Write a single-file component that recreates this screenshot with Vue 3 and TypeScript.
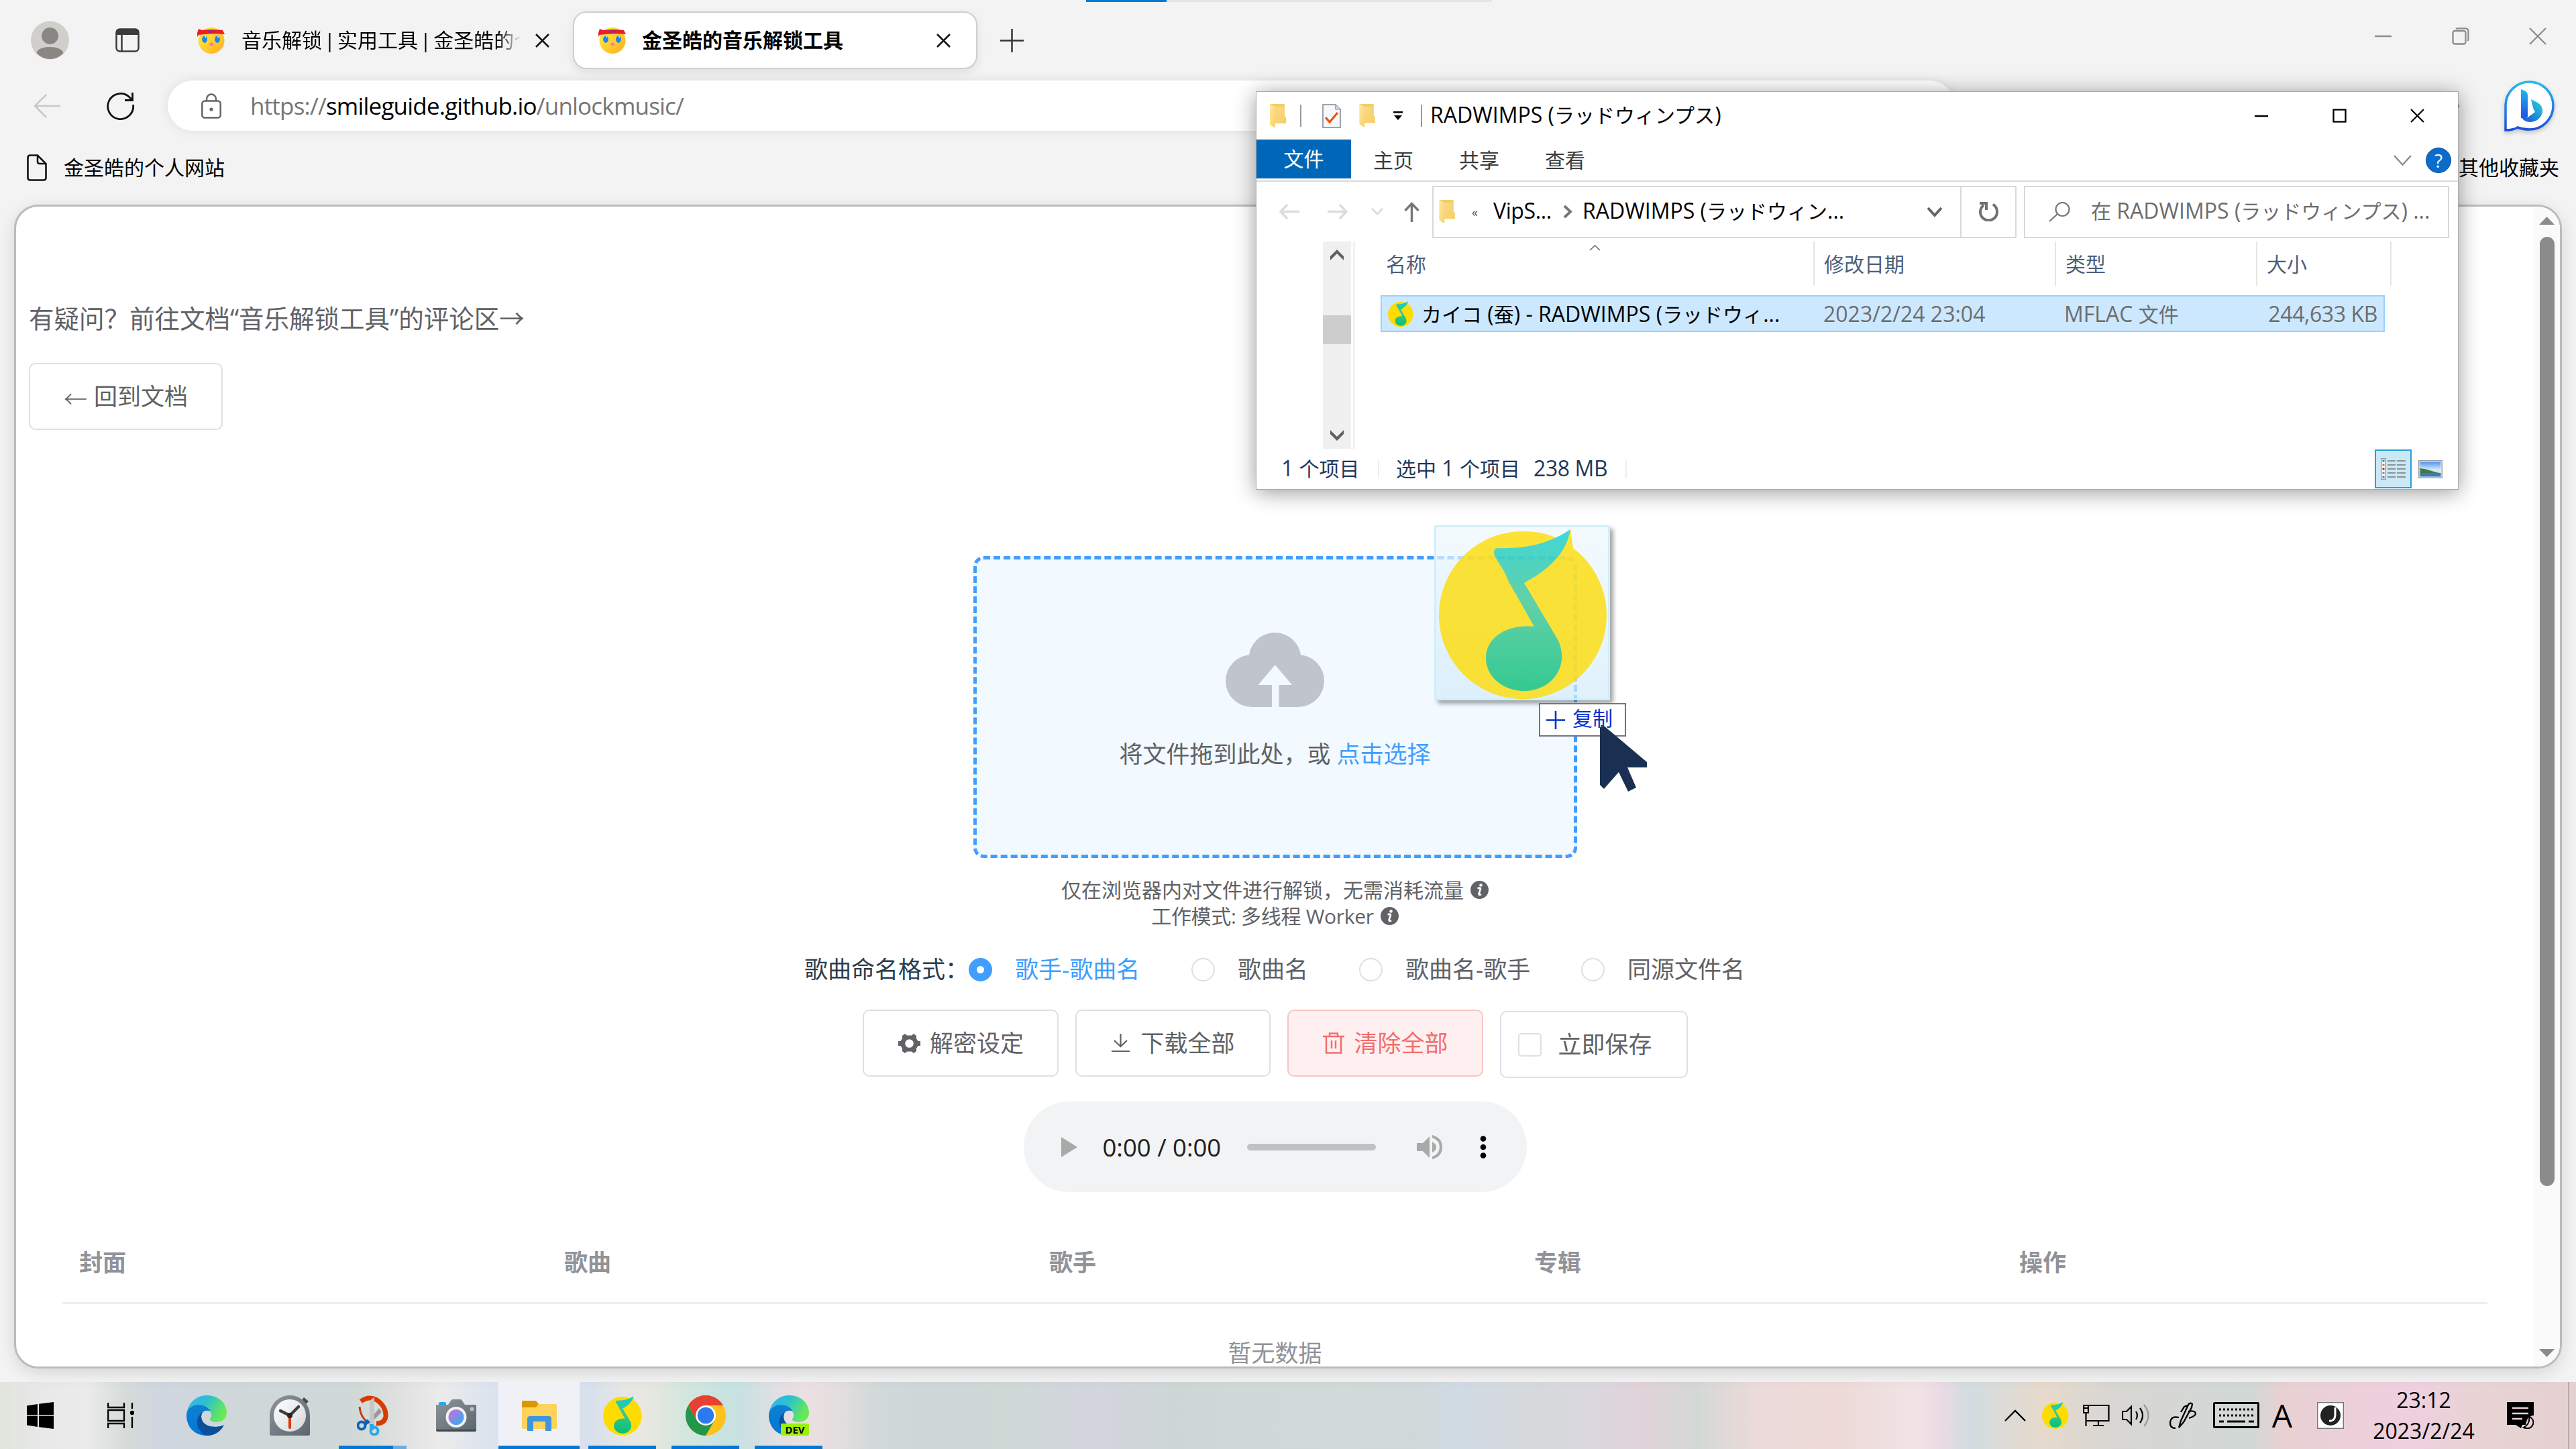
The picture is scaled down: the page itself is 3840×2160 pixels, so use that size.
<script setup lang="ts">
interface Radio { label: string; checked: boolean }

const radios: Radio[] = [
  { label: '歌手-歌曲名', checked: true },
  { label: '歌曲名', checked: false },
  { label: '歌曲名-歌手', checked: false },
  { label: '同源文件名', checked: false },
]
const columns: string[] = ['封面', '歌曲', '歌手', '专辑', '操作']
const ribbon: string[] = ['主页', '共享', '查看']
</script>

<template>
  <div class="screen">
    <svg class="defs" width="0" height="0" aria-hidden="true">
      <defs>
        <linearGradient id="note" x1="0" y1="0" x2="0" y2="1"><stop offset="0" stop-color="#10cdcb" /><stop offset=".45" stop-color="#3cc790" /><stop offset="1" stop-color="#06bf74" /></linearGradient>
        <linearGradient id="fold" x1="0" y1="0" x2="1" y2="1"><stop offset="0" stop-color="#ffe8a6" /><stop offset="1" stop-color="#f8d064" /></linearGradient>
        <linearGradient id="face" x1="0" y1="0" x2="1" y2="1"><stop offset="0" stop-color="#fff23c" /><stop offset="1" stop-color="#ffab20" /></linearGradient>
        <linearGradient id="edgeTop" x1="0" y1="0" x2="1" y2=".4"><stop offset="0" stop-color="#36b4f5" /><stop offset=".5" stop-color="#2cc0d0" /><stop offset="1" stop-color="#66ea56" /></linearGradient>
        <linearGradient id="edgeBlue" x1="0" y1="0" x2="0" y2="1"><stop offset="0" stop-color="#0f7fd0" /><stop offset="1" stop-color="#0078d7" /></linearGradient>
        <linearGradient id="grey" x1="0" y1="0" x2="1" y2="1"><stop offset="0" stop-color="#8c959b" /><stop offset="1" stop-color="#5c666d" /></linearGradient>
        <linearGradient id="dial" x1="0" y1="0" x2="1" y2="1"><stop offset="0" stop-color="#ffffff" /><stop offset="1" stop-color="#d3d6d8" /></linearGradient>
        <linearGradient id="lens" x1="0" y1="0" x2="1" y2="1"><stop offset=".2" stop-color="#b17ae0" /><stop offset="1" stop-color="#22b4f0" /></linearGradient>
        <linearGradient id="bingA" x1="0" y1="0" x2="0" y2="1"><stop offset="0" stop-color="#25b7f0" /><stop offset="1" stop-color="#1b4fe0" /></linearGradient>
        <linearGradient id="bingB" x1="0" y1="1" x2="1" y2="0"><stop offset="0" stop-color="#1b48dc" /><stop offset="1" stop-color="#28dcd8" /></linearGradient>
        <linearGradient id="sky" x1="0" y1="0" x2="0" y2="1"><stop offset="0" stop-color="#4f95f0" /><stop offset=".5" stop-color="#cfe6fb" /><stop offset="1" stop-color="#cfe6fb" /></linearGradient>
      </defs>
      <symbol id="qq" viewBox="0 0 252 254">
        <path fill="#ffdc00" d="M126 3A125 125 0 1 0 200 28L196 0Q186 8 176 13A125 125 0 0 0 126 3Z" />
        <path fill="url(#note)" d="M88 28C135 30 170 18 196 0C190 36 164 60 127 80L178 166C196 207 165 241 127 241C95 241 70 219 70 192C70 162 100 141 142 145L104 78C98 60 84 45 82 36Q82 28 88 28Z" />
      </symbol>
      <symbol id="folder" viewBox="0 0 24 36">
        <path fill="#f3cd69" d="M0 0H22V18L24 20V29H6Z" />
        <path fill="url(#fold)" d="M0 0L8 4V36L0 31Z" />
        <path fill="url(#fold)" d="M8 4H22V18L24 20V29H8Z" opacity=".45" />
      </symbol>
      <symbol id="smile" viewBox="0 0 42 40">
        <path fill="#ffe838" d="M15 5Q21-4 27 5Z" />
        <circle cx="21" cy="20.500" r="19.500" fill="url(#face)" />
        <path fill="#ee1c25" d="M2 3L7 5Q21 3 38 5L41 11Q21 9 2 12L0 15V9Z" />
        <path d="M17 5L20 9M22 5L25 8" stroke="#6a35b8" stroke-width="2.500" />
        <ellipse cx="11" cy="18.500" rx="3.800" ry="5.200" fill="#1985f4" /><ellipse cx="30" cy="18.500" rx="3.800" ry="5.200" fill="#1985f4" />
        <circle cx="12" cy="15" r="1" fill="#fff" /><circle cx="31" cy="15" r="1" fill="#fff" />
        <path fill="#ff6fa8" d="M21 23L24 26L21 29L18 26Z" />
      </symbol>
      <symbol id="edge" viewBox="0 0 60 60">
        <path fill="url(#edgeTop)" d="M0 28C3 8 18 0 30 0C48 0 60 12 60 26C60 35 52 40 45 40C39 40 35 38 35 36C35 34 38 33 37 28C35 20 28 14 18 14C9 14 2 20 0 28Z" />
        <path fill="url(#edgeBlue)" d="M0 30C0 20 9 14 18 14C26 14 33 18 36 24C29 21 22 24 22 32C22 44 36 50 55 45C49 56 39 60 30 60C12 60 0 47 0 30Z" />
        <path fill="#0d4f9c" d="M24 25C13 32 12 50 28 60C40 61 50 55 55 46C56 44 55 44 54 45C40 50 23 46 22 32Q22 28 24 25Z" />
      </symbol>
      <symbol id="info" viewBox="0 0 27 27">
        <circle cx="13.500" cy="13.500" r="13.500" fill="#606266" />
        <circle cx="15.500" cy="6.500" r="2.300" fill="#fff" />
        <path d="M10.500 11.500Q15 9.500 15 12L12.500 19.500Q12.500 22 16 20" fill="none" stroke="#fff" stroke-width="2.600" />
      </symbol>
    </svg>

    <!-- browser -->
    <div class="browser">
      <div class="loadbar"><i></i></div>
      <header class="tabstrip">
        <svg class="avatar" width="57" height="58" viewBox="0 0 57 58"><circle cx="28.500" cy="29" r="28.500" fill="#d0cfcb" /><ellipse cx="28.500" cy="22.500" rx="12.500" ry="12.500" fill="#8a8683" /><path fill="#8a8683" d="M8.500 48C10 36 46 36 48.500 48Q40 57 28.500 57T8.500 48Z" /></svg>
        <svg class="tabicon" width="36" height="36" viewBox="0 0 36 36"><rect x="1.500" y="1.500" width="33" height="33" rx="5" fill="none" stroke="#3b3b3b" stroke-width="2.500" /><path fill="#3b3b3b" d="M1 10V6Q1 1 6 1H30Q35 1 35 6V10Z" /><path d="M9.500 10V35" stroke="#3b3b3b" stroke-width="2.500" /></svg>
        <div class="tab">
          <svg width="42" height="40"><use href="#smile" /></svg>
          <span class="tabtext fade">音乐解锁 | 实用工具 | 金圣皓的个</span>
          <svg class="x" width="21" height="21" viewBox="0 0 21 21"><path d="M1 1L20 20M20 1L1 20" stroke="#111" stroke-width="2.500" /></svg>
        </div>
        <div class="tab active">
          <svg width="42" height="40"><use href="#smile" /></svg>
          <span class="tabtext bold">金圣皓的音乐解锁工具</span>
          <svg class="x" width="21" height="21" viewBox="0 0 21 21"><path d="M1 1L20 20M20 1L1 20" stroke="#111" stroke-width="2.500" /></svg>
        </div>
        <svg class="plus" width="35" height="35" viewBox="0 0 35 35"><path d="M17.500 0V35M0 17.500H35" stroke="#333" stroke-width="2.500" /></svg>
        <div class="winctl">
          <svg width="26" height="26" viewBox="0 0 26 26"><path d="M0 13H25" stroke="#8c8c8c" stroke-width="2.500" /></svg>
          <svg width="26" height="26" viewBox="0 0 26 26"><rect x="1.500" y="5" width="19" height="19.500" rx="3" fill="none" stroke="#8c8c8c" stroke-width="2.300" /><path d="M6 2Q7 1.300 9 1.300H20Q24.500 1.300 24.500 6V17Q24.500 19 23.500 20" fill="none" stroke="#8c8c8c" stroke-width="2.300" /></svg>
          <svg width="26" height="26" viewBox="0 0 26 26"><path d="M1 1L25 25M25 1L1 25" stroke="#8c8c8c" stroke-width="2.300" /></svg>
        </div>
      </header>

      <div class="toolbar">
        <svg class="back" width="40" height="36" viewBox="0 0 40 36"><path d="M40 18H2M19 1L2 18L19 35" fill="none" stroke="#c8c8c8" stroke-width="2.600" /></svg>
        <svg class="reload" width="42" height="42" viewBox="0 0 42 42"><path d="M39.500 19A19 19 0 1 1 33.500 7.500L38 12" fill="none" stroke="#111" stroke-width="2.800" /><path d="M38.500 1V12.500H27" fill="none" stroke="#111" stroke-width="2.800" /></svg>
        <div class="omnibox">
          <svg width="30" height="38" viewBox="0 0 30 38"><rect x="1.300" y="11.500" width="27.400" height="25" rx="4" fill="none" stroke="#666" stroke-width="2.500" /><path d="M8 11V8.500A7 7 0 0 1 22 8.500V11" fill="none" stroke="#666" stroke-width="2.500" /><circle cx="15" cy="24" r="2.600" fill="#666" /></svg>
          <span class="url">https://<b>smileguide.github.io</b>/unlockmusic/</span>
        </div>
        <i class="dot"></i>
        <svg class="bing" width="76" height="76" viewBox="0 0 76 76"><path d="M2 74V37A35.500 35.500 0 1 1 37.500 73Q28 73 20 70Q13 74 2 74Z" fill="#fff" stroke="url(#bingA)" stroke-width="3.500" /><path fill="url(#bingA)" d="M25 13L32 16Q35 18 35 21V54L25 56Z" /><path fill="url(#bingB)" d="M40 28L50 33Q58 38 57 47Q54 60 40 62Q26 62 25 50L35 55L46 47L43 41Z" /></svg>
      </div>

      <div class="bookmarks">
        <svg width="30" height="40" viewBox="0 0 30 40"><path d="M1.500 5Q1.500 1.500 5 1.500H16L28.500 14V35Q28.500 38.500 25 38.500H5Q1.500 38.500 1.500 35ZM16 1.500V11Q16 14 19 14H28.500" fill="none" stroke="#111" stroke-width="2.600" /></svg>
        <span>金圣皓的个人网站</span>
        <span class="others">其他收藏夹</span>
      </div>

      <div class="page">
        <main class="doc">
          <p class="question">有疑问？前往文档“音乐解锁工具”的评论区→</p>
          <button class="btn backdoc"><span class="arr">←</span>回到文档</button>

          <div class="drop">
            <svg width="147" height="111" viewBox="0 0 147 111"><g fill="#c0c4cc"><circle cx="39" cy="72" r="39" /><circle cx="108" cy="72" r="39" /><circle cx="73.500" cy="39" r="39" /><rect x="39" y="50" width="69" height="61" /></g><path fill="#f2f9ff" d="M73.700 48L99 78H79.500V111H69V78H48.500Z" /></svg>
            <p>将文件拖到此处，或 <a>点击选择</a></p>
          </div>

          <div class="tips">
            <p>仅在浏览器内对文件进行解锁，无需消耗流量<svg width="27" height="27"><use href="#info" /></svg></p>
            <p><span class="mode">工作模式: 多线程 Worker</span><svg width="27" height="27"><use href="#info" /></svg></p>
          </div>

          <div class="radios">
            <span class="rlabel">歌曲命名格式：</span>
            <label v-for="r in radios" :key="r.label" class="radio" :class="{ on: r.checked }"><i></i>{{ r.label }}</label>
          </div>

          <div class="actions">
            <button class="btn"><svg width="33" height="31" viewBox="0 0 33 31"><path d="M6 4L10 1L13 3.500H20L23 1L27 4V8L29.500 12H33V19H29.500L27 23V27L23 30L20 27.500H13L10 30L6 27V23L3.500 19H0V12H3.500L6 8Z" fill="#606266" /><circle cx="16.500" cy="15.500" r="6.300" fill="#fff" /></svg>解密设定</button>
            <button class="btn dl"><svg width="27" height="28" viewBox="0 0 27 28"><path d="M13.500 0V19M4 10L13.500 19L23 10M0 26H27" fill="none" stroke="#606266" stroke-width="2.200" /></svg>下载全部</button>
            <button class="btn danger"><svg width="32" height="32" viewBox="0 0 32 32"><path d="M0 6H32M5 6V30.500H27V6M10 6V1.500H22V6M13 12V24M19 12V24" fill="none" stroke="#f56c6c" stroke-width="2.500" /></svg>清除全部</button>
            <button class="btn save"><i></i>立即保存</button>
          </div>

          <div class="audio">
            <svg width="24" height="30" viewBox="0 0 24 30"><path fill="#a8a9a9" d="M0 0L24 15L0 30Z" /></svg>
            <span class="time">0:00 / 0:00</span>
            <i class="track"></i>
            <svg class="vol" width="38" height="36" viewBox="0 0 38 36"><path fill="#a8a9a9" d="M0 12H9L19 2V34L9 24H0ZM23 10Q29 13 29 18T23 26ZM23 0Q38 4 38 18T23 36V32Q34 28 34 18T23 4Z" /></svg>
            <svg class="dots" width="10" height="34" viewBox="0 0 10 34"><circle cx="5" cy="4.500" r="4.300" /><circle cx="5" cy="17" r="4.300" /><circle cx="5" cy="29.500" r="4.300" /></svg>
          </div>

          <div class="thead"><span v-for="c in columns" :key="c">{{ c }}</span></div>
          <p class="empty">暂无数据</p>
        </main>
        <aside class="sb">
          <svg width="23" height="12" viewBox="0 0 23 12"><path fill="#8b8b8b" d="M11.500 0L23 12H0Z" /></svg>
          <i></i>
          <svg class="dn" width="23" height="12" viewBox="0 0 23 12"><path fill="#8b8b8b" d="M11.500 12L23 0H0Z" /></svg>
        </aside>
      </div>
    </div>

    <!-- taskbar -->
    <footer class="taskbar">
      <div class="cell start"><svg width="40" height="40" viewBox="0 0 40 40"><path d="M0 5.500L16 3V19H0ZM18 2.700L40 0V19H18ZM0 20.500H16V37L0 34.500ZM18 20.500H40V40L18 37.300Z" /></svg></div>
      <div class="cell start"><svg width="40" height="38" viewBox="0 0 40 38"><path d="M1.200 0V7H25V0M1.200 38V31H25V38M1.200 11H25V27H1.200ZM37 0V9M37 21V38" fill="none" stroke="#000" stroke-width="2.300" /><circle cx="37" cy="15" r="3.200" /></svg></div>
      <div class="apps">
        <div class="cell"><svg width="60" height="60"><use href="#edge" /></svg></div>
        <div class="cell"><svg width="60" height="60" viewBox="0 0 60 60"><path fill="#454a4e" d="M48 7L51 3L58 9L54 13Z" /><path fill="url(#grey)" d="M0 30A30 30 0 0 1 60 30V58Q60 60 58 60H2Q0 60 0 58Z" /><circle cx="30" cy="30" r="24" fill="url(#dial)" /><path d="M30 30L16 23M30 30L43 17" stroke="#3b3f42" stroke-width="4.500" stroke-linecap="round" /><path d="M30 30V48" stroke="#d83b01" stroke-width="4" stroke-linecap="round" /><circle cx="30" cy="30" r="4" fill="#222" /></svg></div>
        <div class="cell run part"><svg width="47" height="60" viewBox="0 0 47 60"><path d="M6 9Q18 0 30 7Q44 17 43 32Q41 42 29 42" fill="none" stroke="#d83b01" stroke-width="7" /><path d="M4 17Q5 32 16 40" fill="none" stroke="#c43a10" stroke-width="3" /><path fill="#999" d="M33 19L22 33L25 37L37 25Z" /><path fill="#c6c6c6" d="M19 8L26 3V44H19Z" /><circle cx="7" cy="45" r="5.500" fill="none" stroke="#0c62b8" stroke-width="4" /><path d="M12 42L18 38" stroke="#0c62b8" stroke-width="6" /><circle cx="26" cy="53" r="5.500" fill="none" stroke="#28a8ea" stroke-width="4" /><path d="M22 43V52" stroke="#28a8ea" stroke-width="6" /></svg></div>
        <div class="cell"><svg width="60" height="48" viewBox="0 0 60 48"><rect x="4" y="4" width="11" height="6" rx="2" fill="#28a8ea" /><path fill="url(#grey)" d="M0 8H18L22 2Q23 0 25 0H36Q38 0 39 2L43 8H60V46H0Z" /><path fill="#40464b" d="M0 45H60V46Q60 48 58 48H2Q0 48 0 46Z" /><circle cx="30" cy="26.500" r="15.500" fill="#f2f2f2" /><circle cx="30" cy="26.500" r="11.500" fill="url(#lens)" /><circle cx="53.500" cy="14.500" r="3" fill="#b8c0c8" /></svg></div>
        <div class="cell run on"><svg width="52" height="46" viewBox="0 0 52 46"><path fill="#d99700" d="M0 3Q0 1 2 1H21L25 6L21 11H0Z" /><path fill="#ffd25a" d="M0 11H21L25 6H50Q52 6 52 8V41Q52 43 50 43H2Q0 43 0 41Z" /><path fill="#3d96e0" d="M8 46V28Q8 24 12 24H40Q44 24 44 28V46H35V32H17V46Z" /></svg></div>
        <div class="cell run"><svg width="58" height="59"><use href="#qq" /></svg></div>
        <div class="cell run"><svg width="60" height="60" viewBox="0 0 60 60"><circle cx="30" cy="30" r="30" fill="#fdc11b" /><path fill="#22964a" d="M4 15A30 30 0 0 0 30 60L43 37.500L17 37.500Z" /><path fill="#e63f33" d="M4 15A30 30 0 0 1 56 15H30L17 37.500Z" /><circle cx="30" cy="30" r="15" fill="#fff" /><circle cx="30" cy="30" r="12.300" fill="#2d79ee" /></svg></div>
        <div class="cell run dev"><svg width="60" height="60"><use href="#edge" /></svg><b>DEV</b></div>
      </div>
      <div class="tray">
        <svg width="32" height="18" viewBox="0 0 32 18"><path d="M1 17L16 2L31 17" fill="none" stroke="#000" stroke-width="2.300" /></svg>
        <svg class="t-qq" width="40" height="40"><use href="#qq" /></svg>
        <svg class="t-net" width="40" height="34" viewBox="0 0 40 34"><path d="M9 2H38.500V25H4.500M4.500 33V13M23 25V32M15 32H31M1 2H8V13H1ZM1 6H8" fill="none" stroke="#000" stroke-width="2.200" /></svg>
        <svg class="t-vol" width="42" height="36" viewBox="0 0 42 36"><path d="M1 12H7L14 5V31L7 24H1ZM21 12Q25 18 21 24M27 7Q35 18 27 29" fill="none" stroke="#000" stroke-width="2.200" /><path d="M33 2Q46 18 33 34" fill="none" stroke="#999" stroke-width="2.200" /></svg>
        <svg class="t-pen" width="40" height="40" viewBox="0 0 40 40"><path d="M14 38L17 28L28 4Q31 0 34 3L33 8L21 30ZM27 5L22 7L17 15M28 14Q38 12 39 17Q39 21 29 24M14 23Q2 20 1 31Q1 39 9 39" fill="none" stroke="#000" stroke-width="2.300" /></svg>
        <svg class="t-kb" width="69" height="40" viewBox="0 0 69 40"><rect x="1.500" y="1.500" width="66" height="36" rx="1" fill="none" stroke="#000" stroke-width="3" /><path d="M9 11H61M9 20H61" stroke="#000" stroke-width="3" stroke-dasharray="3 3" /><path d="M9 29H16M21 29H48M53 29H61" stroke="#000" stroke-width="3" /></svg>
        <span class="ime">A</span>
        <svg class="t-moon" width="40" height="40" viewBox="0 0 40 40"><rect x=".7" y=".7" width="38.600" height="38.600" fill="#fff" stroke="#777" stroke-width="1.400" /><circle cx="20" cy="20" r="15" fill="#222" /><path d="M27 8V20Q26 29 18 28" fill="none" stroke="#fff" stroke-width="3" /></svg>
        <div class="clock"><span class="hm">23:12</span><span class="ymd">2023/2/24</span></div>
        <svg class="t-note" width="40" height="40" viewBox="0 0 40 40"><path d="M0 0H40V20Q30 20 28 34H23L21 39L13 34H0Z" /><path d="M8 9H32M8 17H32M8 25H23" stroke="#ecd2d8" stroke-width="2.300" /><path d="M33 21Q41 26 39 33Q35 42 25 38Q35 33 33 21Z" fill="#ecd2d8" stroke="#000" stroke-width="2" /></svg>
        <i class="peek"></i>
      </div>
    </footer>

    <!-- explorer window -->
    <section class="explorer">
      <div class="xtitle">
        <svg class="f1" width="24" height="36"><use href="#folder" /></svg>
        <i class="sep s1"></i>
        <svg class="chk" width="28" height="36" viewBox="0 0 28 36"><path d="M1 1H20L27 8V35H1Z" fill="#f6f8fa" stroke="#7b8794" stroke-width="1.500" /><path d="M20 1V8H27" fill="#d8dde2" stroke="#7b8794" stroke-width="1.200" /><path d="M5 20L11 27L23 13" fill="none" stroke="#f2500f" stroke-width="3.300" /></svg>
        <svg class="f2" width="24" height="35"><use href="#folder" /></svg>
        <svg class="dd" width="14" height="14" viewBox="0 0 14 14"><path d="M0 0H14V2.500H0ZM1 6H13L7 13Z" /></svg>
        <i class="sep s2"></i>
        <span class="title"><em>RADWIMPS (</em>ラッドウィンプス<em>)</em></span>
        <div class="xctl">
          <svg width="21" height="21" viewBox="0 0 21 21"><path d="M0 11H20" stroke="#000" stroke-width="2.500" /></svg>
          <svg width="21" height="21" viewBox="0 0 21 21"><rect x="1.500" y="1.500" width="18" height="18" fill="none" stroke="#000" stroke-width="2.300" /></svg>
          <svg width="21" height="21" viewBox="0 0 21 21"><path d="M1 1L20 20M20 1L1 20" stroke="#000" stroke-width="2.200" /></svg>
        </div>
      </div>
      <div class="xribbon">
        <span class="file">文件</span>
        <span v-for="t in ribbon" :key="t" class="rt">{{ t }}</span>
        <svg class="exp" width="27" height="16" viewBox="0 0 27 16"><path d="M1 1L13.500 14.500L26 1" fill="none" stroke="#8a8a8a" stroke-width="2.300" /></svg>
        <span class="help">?</span>
      </div>
      <div class="xnav">
        <svg class="nb" width="30" height="23" viewBox="0 0 30 23"><path d="M30 11.500H3M12 1L2 11.500L12 22" fill="none" stroke="#dcdcdc" stroke-width="3.500" /></svg>
        <svg class="nf" width="30" height="23" viewBox="0 0 30 23"><path d="M0 11.500H27M18 1L28 11.500L18 22" fill="none" stroke="#dcdcdc" stroke-width="3.500" /></svg>
        <svg class="nc" width="18" height="12" viewBox="0 0 18 12"><path d="M1 1L9 9L17 1" fill="none" stroke="#dcdcdc" stroke-width="3" /></svg>
        <svg class="nu" width="23" height="30" viewBox="0 0 23 30"><path d="M11.500 30V3M1.500 13L11.500 2.500L21.500 13" fill="none" stroke="#777" stroke-width="3.500" /></svg>
        <div class="addr">
          <svg class="af" width="24" height="35"><use href="#folder" /></svg>
          <span class="lq">«</span>
          <span class="vip"><em>VipS...</em></span>
          <svg class="ac" width="14" height="19" viewBox="0 0 14 19"><path d="M2 1L11 9.500L2 18" fill="none" stroke="#777" stroke-width="4" /></svg>
          <span class="path"><em>RADWIMPS (</em>ラッドウィン<em>...</em></span>
          <svg class="ad" width="24" height="16" viewBox="0 0 24 16"><path d="M2 2L12 13L22 2" fill="none" stroke="#666" stroke-width="4" /></svg>
          <div class="refresh"><svg width="29" height="29" viewBox="0 0 29 29"><path d="M21 3.500Q27 8 27 14.500A12.500 12.500 0 1 1 7 5" fill="none" stroke="#707070" stroke-width="4" /><path d="M1 2H11V12" fill="none" stroke="#707070" stroke-width="4" /></svg></div>
        </div>
        <div class="search">
          <svg width="32" height="30" viewBox="0 0 32 30"><circle cx="20.500" cy="11" r="10" fill="none" stroke="#777" stroke-width="2.200" /><path d="M13 18L1 29" stroke="#777" stroke-width="2.200" /></svg>
          <span>在<em> RADWIMPS (</em>ラッドウィンプス<em>) ...</em></span>
        </div>
      </div>
      <div class="xbody">
        <div class="tree">
          <svg width="20" height="16" viewBox="0 0 20 16"><path fill="#606060" d="M0 10L10 0L20 10V16L10 6L0 16Z" /></svg>
          <i></i>
          <svg class="dn" width="20" height="16" viewBox="0 0 20 16"><path fill="#606060" d="M0 6L10 16L20 6V0L10 10L0 0Z" /></svg>
        </div>
        <div class="files">
          <div class="fh">
            <span>名称<svg width="17" height="9" viewBox="0 0 17 9"><path d="M1 8L8.500 1L16 8" fill="none" stroke="#666" stroke-width="1.500" /></svg></span>
            <span>修改日期</span><span>类型</span><span>大小</span>
          </div>
          <div class="fr">
            <svg width="38" height="39"><use href="#qq" /></svg>
            <span class="name">カイコ<em> (</em>蚕<em>) - RADWIMPS (</em>ラッドウィ<em>...</em></span>
            <span class="date"><em>2023/2/24 23:04</em></span>
            <span class="type"><em>MFLAC </em>文件</span>
            <span class="size"><em>244,633 KB</em></span>
          </div>
        </div>
      </div>
      <div class="xstatus">
        <span class="c1"><em>1 </em>个项目</span><i></i>
        <span class="c2">选中<em> 1 </em>个项目</span><span class="c3"><em>238 MB</em></span><i></i>
        <div class="vb on"><svg width="37" height="32" viewBox="0 0 37 32"><rect x=".7" y=".7" width="6.600" height="30.600" fill="#fff" stroke="#999" stroke-width="1.400" /><path d="M10 4H22M24 4H37M10 10H22M24 10H37M10 16H22M24 16H37M10 22H22M24 22H37M10 28H22M24 28H37" stroke="#777" stroke-width="1.300" /><path d="M2.500 4H5.500M2.500 28H5.500" stroke="#2a86c8" stroke-width="3" /><path d="M2.500 10H5.500M2.500 22H5.500" stroke="#998a40" stroke-width="3" /><path d="M2.500 16H5.500" stroke="#c02020" stroke-width="3" /></svg></div>
        <div class="vb"><svg width="36" height="27" viewBox="0 0 36 27"><rect x=".8" y=".8" width="34.400" height="25.400" fill="#fff" stroke="#999" stroke-width="1.500" /><rect x="2.500" y="2.500" width="31" height="22" fill="url(#sky)" /><path fill="#3f7a4a" d="M2.500 12Q12 13 20 16T33 19V20H2.500Z" /><path fill="#3f78b4" d="M2.500 19H33.500V24.500H2.500Z" /></svg></div>
      </div>
    </section>

    <!-- drag preview, drop hint and pointer -->
    <div class="ghost"><svg width="252" height="254"><use href="#qq" /></svg></div>
    <div class="hint"><svg width="28" height="27" viewBox="0 0 28 27"><path d="M14 0V27M0 13.500H28" stroke="#03c" stroke-width="2.600" /></svg><span>复制</span></div>
    <svg class="cursor" width="71" height="98" viewBox="0 0 71 98"><path fill="#1a3052" d="M0 2L6 0L70 54V62H41L54 92L42 98L28 69L6 94L0 88Z" /></svg>
  </div>
</template>

<style>
body { margin: 0; overflow: hidden; }
</style>

<style scoped>
* { box-sizing: border-box; }
p { margin: 0; }
svg { display: block; flex: none; }
i { display: block; flex: none; }
em { font-style: normal; font-size: 32px; line-height: 1; white-space: pre; }
button { font: inherit; margin: 0; }
.defs { position: absolute; }
.screen { position: relative; width: 3840px; height: 2160px; overflow: hidden; display: flex; flex-direction: column; background: #f3f3f3; font-family: "Open Sans", "Noto Sans CJK SC", sans-serif; font-size: 30px; line-height: 40px; color: #000; white-space: nowrap; }
.browser { height: 2060px; flex: none; display: flex; flex-direction: column; position: relative; }
.loadbar { position: absolute; left: 1619px; top: 0; width: 605px; height: 3px; background: #e4e4e4; }
.loadbar i { width: 120px; height: 3px; background: #0078d7; }
.tabstrip { height: 120px; flex: none; display: flex; align-items: center; padding-left: 46px; }
.tabicon { margin-left: 69px; }
.tab { height: 86px; display: flex; align-items: center; width: 603px; border: 2px solid transparent; }
.tabicon + .tab { width: 600px; margin-left: 46px; padding: 0 33px 0 38px; }
.tabtext { margin-left: 24px; width: 416px; overflow: hidden; }
.fade { -webkit-mask-image: linear-gradient(90deg, #000 92%, transparent 100%); mask-image: linear-gradient(90deg, #000 92%, transparent 100%); word-spacing: -4.500px; }
.bold { font-weight: 700; }
.x { margin-left: auto; }
.active { background: #fff; border: 2px solid #cfcfcf; border-radius: 20px; padding: 0 38px 0 36px; box-shadow: 0 6px 14px rgba(0,0,0,.08); }
.plus { margin-left: 34px; }
.active .tabtext { margin-left: 23px; }
.winctl { margin-left: auto; margin-right: 44px; margin-top: -12px; display: flex; gap: 89px; }
.toolbar { height: 75px; flex: none; display: flex; align-items: center; padding-left: 50px; }
.reload { margin-left: 69px; }
.omnibox { margin-left: 49px; width: 2664px; height: 75px; border-radius: 38px; background: #fff; box-shadow: 0 0 16px rgba(0,0,0,.09); display: flex; align-items: center; padding-left: 50px; }
.url { font-size: 35px; margin-left: 43px; color: #767676; letter-spacing: -.8px; }
.url b { font-weight: 400; color: #000; }
.dot { width: 8px; height: 8px; border-radius: 4px; background: #222; margin-left: 744px; }
.bing { margin-left: 67px; filter: drop-shadow(0 3px 3px rgba(0,0,0,.2)); }
.bookmarks { height: 109px; flex: none; display: flex; align-items: center; padding: 0 25px 0 40px; gap: 25px; }
.others { margin-left: auto; }
.page { height: 1735px; margin: 1px 21px 0 21px; border: 3px solid #bbb; border-radius: 36px; background: #fff; display: flex; overflow: hidden; box-shadow: 0 6px 24px rgba(0,0,0,.12); }
.doc { flex: 1; display: flex; flex-direction: column; align-items: center; font-size: 35px; line-height: 50px; color: #606266; overflow: hidden; }
.doc > * { flex: none; }
.question { align-self: flex-start; margin: 142px 0 0 19px; font-size: 37.500px; }
.btn { height: 100px; border: 2px solid #dcdfe6; border-radius: 10px; background: #fff; color: inherit; display: flex; align-items: center; justify-content: center; gap: 14px; font-size: 35px; line-height: 50px; padding: 0; white-space: nowrap; }
.backdoc { align-self: flex-start; width: 289px; margin: 41px 0 0 19px; gap: 10px; }
.arr { font-weight: 300; padding-top: 8px; }
.drop { width: 900px; height: 450px; margin-top: 188px; border: 5px dashed #409eff; border-radius: 15px; background: #f2f9ff; display: flex; flex-direction: column; align-items: center; padding-top: 109px; gap: 45px; }
.drop a { color: #409eff; }
.tips { margin-top: 28px; font-size: 30px; line-height: 39px; }
.tips p { display: flex; justify-content: center; align-items: center; gap: 10px; }
.mode { letter-spacing: -.3px; }
.radios { width: 1403px; margin: 35px 0 0; display: grid; grid-template-columns: 245px 332px 250px 331px 245px; height: 50px; align-items: center; }
.rlabel { color: #2c3e50; }
.radio { display: flex; align-items: center; gap: 34px; }
.radio i { width: 35px; height: 35px; border-radius: 50%; border: 2px solid #dcdfe6; background: #fff; }
.radio.on { color: #409eff; }
.radio.on i { border: 12.500px solid #409eff; }
.actions { width: 1230px; margin-top: 35px; display: flex; gap: 25px; align-items: flex-start; }
.actions .btn { width: 292px; padding-left: 2px; }
.actions .dl { width: 291px; gap: 16px; }
.actions .danger { background: #fef0f0; border-color: #fbc4c4; color: #f56c6c; }
.actions .save { width: 280px; margin-top: 2px; gap: 25px; justify-content: flex-start; padding-left: 25px; }
.save i { width: 35px; height: 35px; border: 2px solid #dcdfe6; border-radius: 5px; }
.audio { width: 750px; height: 135px; margin-top: 35px; border-radius: 68px; background: #f1f3f4; display: flex; align-items: center; padding-left: 56px; }
.time { width: 178px; margin-left: 38px; color: #202020; font-size: 36.500px; }
.track { width: 192px; height: 10px; border-radius: 5px; background: #c0c1c3; margin-left: 37px; }
.vol { margin-left: 61px; }
.dots { margin-left: 56px; }
.thead { width: 3615px; height: 121px; margin-top: 46px; border-bottom: 3px solid #ebeef5; display: grid; grid-template-columns: repeat(5, 723px); align-items: center; font-weight: 700; color: #909399; padding-left: 25px; }
.empty { margin-top: 48px; color: #909399; }
.sb { width: 39px; flex: none; background: #fafafa; display: flex; flex-direction: column; align-items: center; padding: 15px 0 14px; }
.sb i { width: 22px; height: 1415px; border-radius: 11px; background: #8b8b8b; margin-top: 18px; }
.dn { margin-top: auto; }

.taskbar { height: 100px; display: flex; align-items: center; background: linear-gradient(90deg, #e0e4dc 0, #e8e8ea 60px, #ebebec 130px, #d5dad9 190px, #cfd6e0 240px, #cfd7d9 350px, #d0d8d8 530px, #e0e1e0 600px, #ebebeb 660px, #dbe3ee 730px, #d8e0ec 880px, #e6e6e4 930px, #e9e7e0 960px, #d4e6de 1020px, #c6e3e1 1080px, #cbe0e2 1110px, #e2dfe2 1160px, #ecdfe1 1200px, #e3dedf 1250px, #d3d9d9 1300px, #ced6d8 1370px, #ced8d5 1500px, #d3d5de 1620px, #ced6d5 1750px, #cfdad8 1900px, #d0d9d9 2110px, #d0dae4 2175px, #d5d9db 2276px, #d9d8de 2365px, #e1d2d9 2453px, #d3d8d5 2529px, #ecdada 2617px, #eddad8 2744px, #f1e3e5 2857px, #eadae3 2895px, #d2dce1 2933px, #e6dacc 3046px, #d8d6d3 3148px, #d1d8d6 3355px, #e8d0d2 3400px, #eed0df 3590px, #e8d3d5 3690px, #e5d0d1 3840px); }
.cell { height: 100px; width: 121px; display: flex; align-items: center; justify-content: center; flex: none; position: relative; }
.cell.start { width: 120px; }
.apps { display: flex; gap: 3px; margin-left: 7px; width: 989px; flex: none; }
.run { background: linear-gradient(#0078d7, #0078d7) 50% 100% / 101px 5px no-repeat; }
.part { background: linear-gradient(90deg, #0078d7 81px, #66aee7 81px) 50% 100% / 101px 5px no-repeat; }
.run.on { background: linear-gradient(#0078d7, #0078d7) 50% 100% / 121px 5px no-repeat, #eff1f7; }
.dev b { position: absolute; right: 30px; bottom: 20px; width: 42px; height: 18px; background: #9bf00b; border-radius: 2px; font: 700 15px/18px "Noto Sans", sans-serif; text-align: center; }
.tray { margin-left: 1752px; display: flex; align-items: center; flex: none; }
.t-qq { margin-left: 24px; }
.t-net { margin-left: 21px; }
.t-vol { margin-left: 18px; }
.t-pen { margin-left: 29px; }
.t-kb { margin-left: 25px; }
.ime { width: 28px; margin-left: 20px; font: 400 48px/40px "Open Sans", sans-serif; display: flex; justify-content: center; }
.t-moon { margin-left: 38px; }
.clock { width: 160px; margin-left: 39px; display: flex; flex-direction: column; align-items: center; line-height: 46px; font-size: 32px; }
.t-note { margin-left: 44px; }
.peek { width: 2px; height: 100px; background: #b8a8aa; margin-left: 51px; }

.explorer { position: absolute; left: 1872px; top: 136px; width: 1793px; height: 594px; background: #fff; border: 1px solid #aaa; box-shadow: 0 4px 30px rgba(0,0,0,.4); display: flex; flex-direction: column; }
.xtitle { height: 71px; flex: none; display: flex; align-items: center; padding-left: 20px; }
.sep { width: 2px; height: 33px; background: #999; }
.s1 { margin-left: 21px; }
.chk { margin-left: 31px; }
.f2 { margin-left: 27px; }
.dd { margin-left: 27px; }
.s2 { margin-left: 27px; }
.title { margin-left: 12px; padding-bottom: 2px; }
.xctl { margin-left: auto; margin-right: 50px; display: flex; gap: 95px; }
.xribbon { height: 63px; flex: none; border-bottom: 2px solid #dadbdc; display: flex; align-items: center; color: #3b3b3b; }
.file { width: 141px; height: 58px; align-self: flex-start; background: #0067b8; color: #fff; display: flex; align-items: center; justify-content: center; margin-right: 33px; }
.rt { width: 60px; margin-right: 68px; }
.exp { margin-left: auto; }
.help { width: 38px; height: 38px; border-radius: 50%; background: #0a6ccb; border: 1.500px solid #0a4f94; color: #fff; margin: 0 10px 0 21px; display: flex; align-items: center; justify-content: center; font-size: 28px; }
.xnav { height: 89px; flex: none; display: flex; align-items: center; padding-left: 34px; }
.nf { margin-left: 42px; }
.nc { margin-left: 35px; }
.nu { margin-left: 31px; }
.addr { width: 871px; height: 78px; border: 2px solid #d9d9d9; margin-left: 19px; display: flex; align-items: center; padding-left: 8px; }
.lq { width: 14px; margin-left: 25px; font-size: 18px; color: #555; }
.vip { width: 84px; margin-left: 18px; letter-spacing: -.4px; }
.ac { margin-left: 20px; }
.path { width: 390px; margin-left: 15px; }
.vip, .path, .search span { padding-bottom: 2px; }
.ad { margin-left: auto; }
.refresh { width: 82px; height: 74px; border-left: 2px solid #d9d9d9; margin-left: 26px; display: flex; align-items: center; justify-content: center; }
.search { width: 634px; height: 78px; border: 2px solid #d9d9d9; margin-left: 11px; display: flex; align-items: center; padding-left: 35px; gap: 31px; color: #6d6d6d; }
.xbody { height: 310px; flex: none; display: flex; padding-left: 99px; }
.tree { width: 42px; height: 309px; background: #f0f0f0; display: flex; flex-direction: column; align-items: center; padding: 12px 0; }
.tree i { width: 42px; height: 43px; background: #cdcdcd; margin-top: 82px; }
.files { margin-left: 3px; border-left: 3px solid #f2f2f2; width: 1548px; }
.fh { display: grid; grid-template-columns: 657px 360px 300px 200px; height: 66px; margin-left: 28px; color: #4c607a; }
.fh span { border-right: 2px solid #e5e5e5; padding-left: 14px; line-height: 68px; height: 66px; position: relative; }
.fh span:first-child { padding-left: 18px; }
.fh svg { position: absolute; left: 321px; top: 5px; }
.fr { margin: 14px 0 0 38px; width: 1497px; height: 55px; background: #cce8ff; border: 2px solid #99d1ff; display: flex; align-items: center; padding: 2px 9px 0; color: #6d6d6d; }
.name { width: 606px; padding-left: 12px; color: #000; }
.date { width: 360px; padding-left: 5px; }
.type { width: 180px; padding-left: 4px; }
.size { margin-left: auto; letter-spacing: -.4px; }
.xstatus { flex: 1; display: flex; align-items: center; padding-left: 37px; padding-bottom: 1px; color: #1e395b; }
.xstatus i { width: 2px; height: 28px; background: #eee; }
.c1 { width: 144px; }
.c2 { margin-left: 25px; width: 187px; }
.c3 { margin-left: 18px; width: 137px; letter-spacing: -.4px; }
.vb { width: 55px; height: 58px; display: flex; align-items: center; justify-content: center; }
.vb.on { margin-left: auto; border: 2px solid #26a0da; background: #cbe8f6; }
.vb:last-child { margin-right: 14px; }

.ghost { position: absolute; left: 2138px; top: 783px; width: 262px; height: 261px; border: 3px solid rgba(205,238,252,.9); background: linear-gradient(rgba(238,248,254,.7), rgba(212,236,251,.7)); box-shadow: 5px 5px 6px rgba(0,0,0,.35); padding: 3px 0 0 4px; border-radius: 3px; }
.ghost svg { opacity: .78; }
.hint { position: absolute; left: 2294px; top: 1048px; width: 130px; height: 50px; background: #fff; border: 2px solid #767676; display: flex; align-items: center; gap: 11px; padding-left: 9px; color: #03c; }
.hint span { padding-bottom: 4px; }
.cursor { position: absolute; left: 2385px; top: 1082px; }
</style>
